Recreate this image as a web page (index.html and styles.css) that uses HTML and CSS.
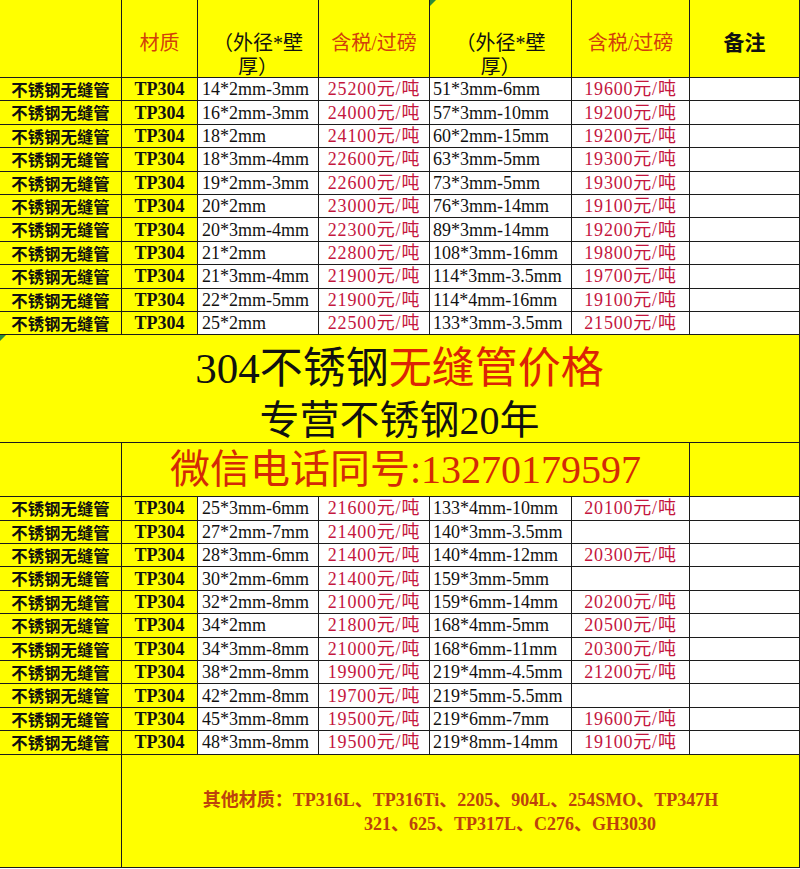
FILE: index.html
```html
<!DOCTYPE html>
<html lang="zh-CN">
<head>
<meta charset="utf-8">
<title>304不锈钢无缝管价格</title>
<link rel="stylesheet" href="styles.css">
</head>
<body>
<div class="sheet">
  <div class="c y h"></div>
  <div class="c y h hred">材质</div>
  <div class="c y h h2"><div class="hl">（外径*壁</div><div class="hl">厚）</div></div>
  <div class="c y h hred">含税/过磅</div>
  <div class="c y h h2 mark"><div class="hl">（外径*壁</div><div class="hl">厚）</div></div>
  <div class="c y h hred">含税/过磅</div>
  <div class="c y h hnote">备注</div>

  <div class="c y name">不锈钢无缝管</div><div class="c y mat">TP304</div><div class="c w size">14*2mm-3mm</div><div class="c w price">25200元/吨</div><div class="c w size s2">51*3mm-6mm</div><div class="c w price">19600元/吨</div><div class="c w"></div>
  <div class="c y name">不锈钢无缝管</div><div class="c y mat">TP304</div><div class="c w size">16*2mm-3mm</div><div class="c w price">24000元/吨</div><div class="c w size s2">57*3mm-10mm</div><div class="c w price">19200元/吨</div><div class="c w"></div>
  <div class="c y name">不锈钢无缝管</div><div class="c y mat">TP304</div><div class="c w size">18*2mm</div><div class="c w price">24100元/吨</div><div class="c w size s2">60*2mm-15mm</div><div class="c w price">19200元/吨</div><div class="c w"></div>
  <div class="c y name">不锈钢无缝管</div><div class="c y mat">TP304</div><div class="c w size">18*3mm-4mm</div><div class="c w price">22600元/吨</div><div class="c w size s2">63*3mm-5mm</div><div class="c w price">19300元/吨</div><div class="c w"></div>
  <div class="c y name">不锈钢无缝管</div><div class="c y mat">TP304</div><div class="c w size">19*2mm-3mm</div><div class="c w price">22600元/吨</div><div class="c w size s2">73*3mm-5mm</div><div class="c w price">19300元/吨</div><div class="c w"></div>
  <div class="c y name">不锈钢无缝管</div><div class="c y mat">TP304</div><div class="c w size">20*2mm</div><div class="c w price">23000元/吨</div><div class="c w size s2">76*3mm-14mm</div><div class="c w price">19100元/吨</div><div class="c w"></div>
  <div class="c y name">不锈钢无缝管</div><div class="c y mat">TP304</div><div class="c w size">20*3mm-4mm</div><div class="c w price">22300元/吨</div><div class="c w size s2">89*3mm-14mm</div><div class="c w price">19200元/吨</div><div class="c w"></div>
  <div class="c y name">不锈钢无缝管</div><div class="c y mat">TP304</div><div class="c w size">21*2mm</div><div class="c w price">22800元/吨</div><div class="c w size s2">108*3mm-16mm</div><div class="c w price">19800元/吨</div><div class="c w"></div>
  <div class="c y name">不锈钢无缝管</div><div class="c y mat">TP304</div><div class="c w size">21*3mm-4mm</div><div class="c w price">21900元/吨</div><div class="c w size s2">114*3mm-3.5mm</div><div class="c w price">19700元/吨</div><div class="c w"></div>
  <div class="c y name">不锈钢无缝管</div><div class="c y mat">TP304</div><div class="c w size">22*2mm-5mm</div><div class="c w price">21900元/吨</div><div class="c w size s2">114*4mm-16mm</div><div class="c w price">19100元/吨</div><div class="c w"></div>
  <div class="c y name">不锈钢无缝管</div><div class="c y mat">TP304</div><div class="c w size">25*2mm</div><div class="c w price">22500元/吨</div><div class="c w size s2">133*3mm-3.5mm</div><div class="c w price">21500元/吨</div><div class="c w"></div>

  <div class="c y banner mark">
    <div class="t1">304不锈钢<span class="red">无缝管价格</span></div>
    <div class="t2">专营不锈钢20年</div>
  </div>

  <div class="c y"></div>
  <div class="c y wechat">微信电话同号:13270179597</div>
  <div class="c y"></div>

  <div class="c y name">不锈钢无缝管</div><div class="c y mat">TP304</div><div class="c w size">25*3mm-6mm</div><div class="c w price">21600元/吨</div><div class="c w size s2">133*4mm-10mm</div><div class="c w price">20100元/吨</div><div class="c w"></div>
  <div class="c y name">不锈钢无缝管</div><div class="c y mat">TP304</div><div class="c w size">27*2mm-7mm</div><div class="c w price">21400元/吨</div><div class="c w size s2">140*3mm-3.5mm</div><div class="c w price"></div><div class="c w"></div>
  <div class="c y name">不锈钢无缝管</div><div class="c y mat">TP304</div><div class="c w size">28*3mm-6mm</div><div class="c w price">21400元/吨</div><div class="c w size s2">140*4mm-12mm</div><div class="c w price">20300元/吨</div><div class="c w"></div>
  <div class="c y name">不锈钢无缝管</div><div class="c y mat">TP304</div><div class="c w size">30*2mm-6mm</div><div class="c w price">21400元/吨</div><div class="c w size s2">159*3mm-5mm</div><div class="c w price"></div><div class="c w"></div>
  <div class="c y name">不锈钢无缝管</div><div class="c y mat">TP304</div><div class="c w size">32*2mm-8mm</div><div class="c w price">21000元/吨</div><div class="c w size s2">159*6mm-14mm</div><div class="c w price">20200元/吨</div><div class="c w"></div>
  <div class="c y name">不锈钢无缝管</div><div class="c y mat">TP304</div><div class="c w size">34*2mm</div><div class="c w price">21800元/吨</div><div class="c w size s2">168*4mm-5mm</div><div class="c w price">20500元/吨</div><div class="c w"></div>
  <div class="c y name">不锈钢无缝管</div><div class="c y mat">TP304</div><div class="c w size">34*3mm-8mm</div><div class="c w price">21000元/吨</div><div class="c w size s2">168*6mm-11mm</div><div class="c w price">20300元/吨</div><div class="c w"></div>
  <div class="c y name">不锈钢无缝管</div><div class="c y mat">TP304</div><div class="c w size">38*2mm-8mm</div><div class="c w price">19900元/吨</div><div class="c w size s2">219*4mm-4.5mm</div><div class="c w price">21200元/吨</div><div class="c w"></div>
  <div class="c y name">不锈钢无缝管</div><div class="c y mat">TP304</div><div class="c w size">42*2mm-8mm</div><div class="c w price">19700元/吨</div><div class="c w size s2">219*5mm-5.5mm</div><div class="c w price"></div><div class="c w"></div>
  <div class="c y name">不锈钢无缝管</div><div class="c y mat">TP304</div><div class="c w size">45*3mm-8mm</div><div class="c w price">19500元/吨</div><div class="c w size s2">219*6mm-7mm</div><div class="c w price">19600元/吨</div><div class="c w"></div>
  <div class="c y name">不锈钢无缝管</div><div class="c y mat">TP304</div><div class="c w size">48*3mm-8mm</div><div class="c w price">19500元/吨</div><div class="c w size s2">219*8mm-14mm</div><div class="c w price">19100元/吨</div><div class="c w"></div>

  <div class="c y"></div>
  <div class="c y other">
    <div class="o1">其他材质：TP316L、TP316Ti、2205、904L、254SMO、TP347H</div>
    <div class="o2">321、625、TP317L、C276、GH3030</div>
  </div>
</div>
</body>
</html>
```

FILE: styles.css
```css
html, body {
  margin: 0;
  padding: 0;
  background: #ffffff;
}

.sheet {
  display: grid;
  width: 800px;
  grid-template-columns: 122px 76px 121px 111px 142px 118px 110px;
  grid-template-rows: 78px repeat(11, 23.4px) 108px 54px repeat(11, 23.4px) 113px;
  font-family: "Liberation Serif", "Noto Sans CJK SC", serif;
  color: #111111;
}

.c {
  box-sizing: border-box;
  border-right: 1px solid #1c1c1c;
  border-bottom: 1px solid #1c1c1c;
  display: flex;
  align-items: center;
  justify-content: center;
  overflow: hidden;
  white-space: nowrap;
  position: relative;
}

.y { background: #ffff00; }
.w { background: #ffffff; }

/* header */
.h {
  font-family: "Liberation Serif", "Noto Sans CJK SC", sans-serif;
  font-size: 20px;
  line-height: 24px;
  padding-top: 8px;
  overflow: visible;
}
.hred {
  color: #d2400a;
}
.h2 {
  flex-direction: column;
  justify-content: flex-start;
  padding-top: 31px;
}
.hl {
  height: 24px;
  line-height: 24px;
  text-align: center;
}
.hnote {
  font-weight: 700;
  font-size: 21px;
}

/* data cells */
.name {
  font-family: "Noto Sans CJK SC", sans-serif;
  font-weight: 700;
  font-size: 16.4px;
  line-height: 1;
}
.mat {
  font-weight: 700;
  font-size: 18px;
  line-height: 1;
}
.size {
  justify-content: flex-start;
  padding-left: 4px;
  font-size: 18px;
  line-height: 1;
}
.s2 {
  padding-left: 3px;
}
.price {
  color: #c4163e;
  font-size: 18px;
  letter-spacing: 0.8px;
  line-height: 1;
}

/* banner */
.banner {
  grid-column: 1 / -1;
  flex-direction: column;
  padding-top: 14px;
}
.t1 {
  font-size: 43px;
  line-height: 50px;
}
.t1 .red {
  color: #dc2306;
}
.t2 {
  font-size: 40px;
  line-height: 54px;
}

.wechat {
  grid-column: 2 / 7;
  font-size: 40px;
  line-height: 1;
  color: #d42a06;
}

/* bottom note */
.other {
  grid-column: 2 / -1;
  flex-direction: column;
  font-weight: 700;
  font-size: 18px;
  line-height: 24px;
  color: #bc420c;
  padding-top: 2px;
}
.o2 {
  padding-left: 99px;
}

/* excel green corner markers */
.mark::before {
  content: "";
  position: absolute;
  left: 0;
  top: 0;
  border-top: 6px solid #2e8b3a;
  border-right: 6px solid transparent;
}
```
